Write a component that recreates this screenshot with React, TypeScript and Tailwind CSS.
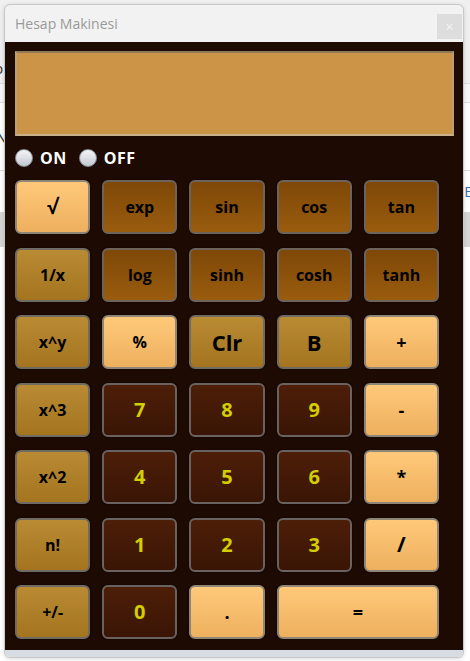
import React from "react";

type Kind = "light" | "gold" | "fn" | "digit";

const kindClass: Record<Kind, string> = {
  light:
    "bg-gradient-to-b from-[#ffc97a] to-[#edb05e] border-[#8f8678] text-black",
  gold: "bg-gradient-to-b from-[#b98b33] to-[#a4741f] border-[#6f6a62] text-black",
  fn: "bg-gradient-to-b from-[#7e4808] to-[#9a5c0e] border-[#6d635a] text-black",
  digit:
    "bg-gradient-to-b from-[#4d1e08] to-[#3a1505] border-[#6a6260] text-[#d2cf00]",
};

type Key = { label: string; kind: Kind; size?: string; span?: boolean };

const keys: Key[] = [
  { label: "√", kind: "light", size: "text-[20px]" },
  { label: "exp", kind: "fn" },
  { label: "sin", kind: "fn" },
  { label: "cos", kind: "fn" },
  { label: "tan", kind: "fn" },

  { label: "1/x", kind: "gold" },
  { label: "log", kind: "fn" },
  { label: "sinh", kind: "fn" },
  { label: "cosh", kind: "fn" },
  { label: "tanh", kind: "fn" },

  { label: "x^y", kind: "gold" },
  { label: "%", kind: "light" },
  { label: "Clr", kind: "gold", size: "text-[22px]" },
  { label: "B", kind: "gold", size: "text-[22px]" },
  { label: "+", kind: "light", size: "text-[18px]" },

  { label: "x^3", kind: "gold" },
  { label: "7", kind: "digit", size: "text-[20px]" },
  { label: "8", kind: "digit", size: "text-[20px]" },
  { label: "9", kind: "digit", size: "text-[20px]" },
  { label: "-", kind: "light", size: "text-[18px]" },

  { label: "x^2", kind: "gold" },
  { label: "4", kind: "digit", size: "text-[20px]" },
  { label: "5", kind: "digit", size: "text-[20px]" },
  { label: "6", kind: "digit", size: "text-[20px]" },
  { label: "*", kind: "light", size: "text-[18px]" },

  { label: "n!", kind: "gold" },
  { label: "1", kind: "digit", size: "text-[20px]" },
  { label: "2", kind: "digit", size: "text-[20px]" },
  { label: "3", kind: "digit", size: "text-[20px]" },
  { label: "/", kind: "light", size: "text-[21px]" },

  { label: "+/-", kind: "gold" },
  { label: "0", kind: "digit", size: "text-[20px]" },
  { label: ".", kind: "light", size: "text-[18px]" },
  { label: "=", kind: "light", size: "text-[18px]", span: true },
];

function CalcKey({ k }: { k: Key }) {
  return (
    <button
      className={`h-[54px] rounded-[6px] border-2 font-bold leading-none flex items-center justify-center shadow-[0_0_2px_rgba(0,0,0,0.6)] ${
        kindClass[k.kind]
      } ${k.size ?? "text-[16px]"} ${k.span ? "col-span-2" : ""}`}
      style={{ fontFamily: '"Open Sans", "Noto Sans", sans-serif' }}
    >
      {k.label}
    </button>
  );
}

function Radio({ label }: { label: string }) {
  return (
    <label className="flex items-center gap-[7px]">
      <span className="w-[18px] h-[18px] rounded-full border border-[#8a8d96] bg-gradient-to-b from-[#f4f5f8] to-[#c4c8d2]" />
      <span className="text-white font-bold text-[16px] tracking-[0.5px]">
        {label}
      </span>
    </label>
  );
}

export default function App() {
  return (
    <div
      className="relative w-[470px] h-[661px] overflow-hidden bg-white"
      style={{ fontFamily: '"Open Sans", "Noto Sans", sans-serif' }}
    >
      {/* page behind the dialog */}
      <div className="flex flex-col">
        <div className="h-[83px] bg-[#f0f0f0] flex items-end pb-[4px] text-[15px] text-[#333]">
          <span className="-ml-[6px]">p</span>
        </div>
        <div className="h-[20px] bg-[#f7f7f7] border-y border-[#dcdcdc]" />
        <div className="h-[68px] bg-white border-b border-[#dcdcdc] flex items-center text-[18px] text-[#444]">
          <span className="-ml-[6px]">N</span>
        </div>
        <div className="h-[41px] bg-white flex items-center justify-end text-[15px] text-[#3a6bb0]">
          <span className="-mr-[4px]">B</span>
        </div>
        <div className="h-[35px] bg-[#d6d6d6]" />
        <div className="flex-1 bg-white" />
      </div>

      {/* dialog */}
      <div className="absolute left-[4px] top-[4px] w-[460px] h-[654px] rounded-[6px] border border-[#c8c8c8] bg-[#f2f2f2] flex flex-col overflow-hidden shadow-[0_1px_4px_rgba(0,0,0,0.15)]">
        <div className="h-[37px] flex items-center justify-between pl-[10px] pr-[1px]">
          <span className="text-[14px] text-[#9a9a9a]">Hesap Makinesi</span>
          <span className="w-[25px] h-[25px] mt-[6px] bg-[#dddddd] flex items-center justify-center text-[#f4f4f4] text-[14px] leading-none">
            ×
          </span>
        </div>

        <div className="flex-1 bg-[#1d0a02] pl-[10px] pr-[9px] pt-[9px] flex flex-col">
          <div className="h-[85px] bg-[#cb9446] border-2 border-t-[#8e7a58] border-l-[#b9a07a] border-r-[#b9a07a] border-b-[#c8b08a]" />

          <div className="mt-[13px] h-[18px] flex items-center gap-[12px]">
            <Radio label="ON" />
            <Radio label="OFF" />
          </div>

          <div className="mt-[13px] w-[424px] grid grid-cols-5 gap-x-[12px] gap-y-[13.5px]">
            {keys.map((k) => (
              <CalcKey key={k.label} k={k} />
            ))}
          </div>
        </div>

        <div className="h-[7px] bg-[#d7dbe2]" />
      </div>
    </div>
  );
}
